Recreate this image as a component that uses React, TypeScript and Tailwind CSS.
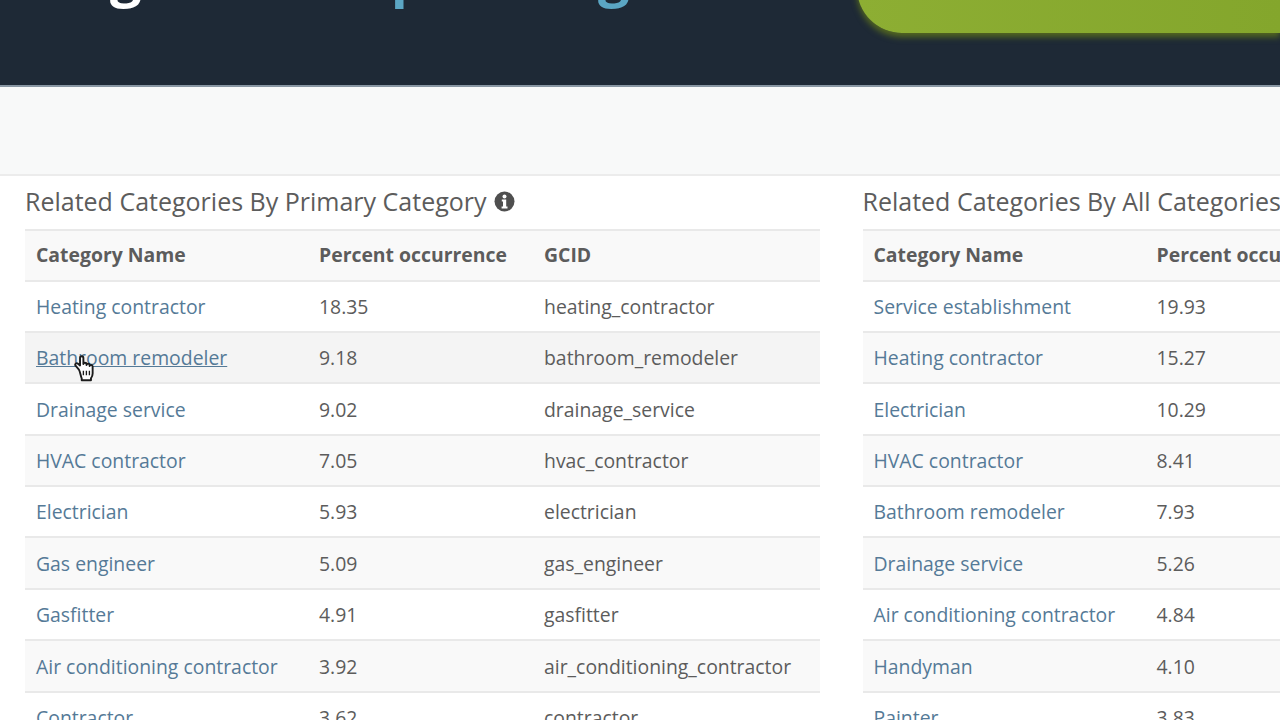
const primaryRows = [
  ["Heating contractor", "18.35", "heating_contractor"],
  ["Bathroom remodeler", "9.18", "bathroom_remodeler"],
  ["Drainage service", "9.02", "drainage_service"],
  ["HVAC contractor", "7.05", "hvac_contractor"],
  ["Electrician", "5.93", "electrician"],
  ["Gas engineer", "5.09", "gas_engineer"],
  ["Gasfitter", "4.91", "gasfitter"],
  ["Air conditioning contractor", "3.92", "air_conditioning_contractor"],
  ["Contractor", "3.62", "contractor"],
];

const allRows = [
  ["Service establishment", "19.93", "establishment_service"],
  ["Heating contractor", "15.27", "heating_contractor"],
  ["Electrician", "10.29", "electrician"],
  ["HVAC contractor", "8.41", "hvac_contractor"],
  ["Bathroom remodeler", "7.93", "bathroom_remodeler"],
  ["Drainage service", "5.26", "drainage_service"],
  ["Air conditioning contractor", "4.84", "air_conditioning_contractor"],
  ["Handyman", "4.10", "handyman"],
  ["Painter", "3.83", "painter"],
];

function InfoIcon() {
  return (
    <svg width="21" height="21" viewBox="0 0 21 21" className="shrink-0">
      <circle cx="10.5" cy="10.5" r="10" fill="#4f4f4f" />
      <circle cx="10.5" cy="5.6" r="2" fill="#fff" />
      <path d="M7.8 8.6h4.4v7h1.3v1.8H7.6v-1.8h1.4v-5.2H7.8z" fill="#fff" />
    </svg>
  );
}

function HandCursor() {
  return (
    <svg width="25" height="29" viewBox="0 0 22 26" className="absolute left-[72px] top-[354px]">
      <path
        d="M6 14 3 10.5c-1.200-1.400.8-3 2.200-1.800L7 10.300V3.500c0-2 3-2 3 0V9c0-1.500 2.800-1.500 2.800 0v.800c0-1.500 2.800-1.500 2.800 0v1c0-1.400 2.700-1.300 2.700.3v6.400c0 2-.6 3-1.500 4.300v1.700H8.500v-1.700C7.500 19.500 7.200 16 6 14Z"
        fill="#fff"
        stroke="#1c1c1c"
        strokeWidth="1.700"
        strokeLinejoin="round"
      />
      <path d="M10 15v4M12.700 15v4M15.400 15v4" stroke="#1c1c1c" strokeWidth="1.200" />
    </svg>
  );
}

function CategoryTable({ title, rows, info }: { title: string; rows: string[][]; info?: boolean }) {
  return (
    <div className="w-[795px] shrink-0">
      <h2 className="flex items-center gap-[7px] h-[53px] pb-[2px] text-[25px] font-normal text-[#5c5c5c] whitespace-nowrap">
        {title}
        {info && <InfoIcon />}
      </h2>
      <div className="grid grid-cols-[283px_225px_1fr] items-center h-[52.500px] pb-[1px] bg-[#f9f9f9] border-y-2 border-[#e9e9e9] px-[11px] text-[19.400px] font-bold text-[#5c5c5c]">
        <span>Category Name</span>
        <span>Percent occurrence</span>
        <span>GCID</span>
      </div>
      {rows.map((row, i) => {
        const hovered = info && i === 1;
        return (
          <div
            key={row[2]}
            className={`grid grid-cols-[283px_225px_1fr] items-center h-[51.400px] pt-[0.500px] border-b-2 border-[#e9e9e9] px-[11px] text-[19.400px] text-[#5c5c5c] ${
              hovered ? "bg-[#f4f4f4]" : i % 2 === 1 ? "bg-[#f9f9f9]" : "bg-white"
            }`}
          >
            <a className={`text-[#557a97] whitespace-nowrap ${hovered ? "underline" : ""}`}>{row[0]}</a>
            <span>{row[1]}</span>
            <span className="whitespace-nowrap">{row[2]}</span>
          </div>
        );
      })}
    </div>
  );
}

export default function App() {
  return (
    <div className="relative w-[1280px] h-[720px] overflow-hidden bg-white font-['Open_Sans',sans-serif]">
      <header className="flex justify-between items-start h-[87px] bg-[#1e2936] border-b-2 border-[#8896a3] overflow-hidden">
        <div className="flex -mt-[58px] text-[56px] leading-[64px] font-bold text-[#5ba6c4]">
          <span className="ml-[110px] text-white">g</span>
          <span className="ml-[249px]">p</span>
          <span className="ml-[172px]">g</span>
        </div>
        <div className="w-[423.500px] h-[45px] -mt-[12px] rounded-bl-[45px] bg-linear-to-r from-[#8dae33] to-[#84a62c] shadow-[0_4px_6px_#55691f]" />
      </header>
      <div className="h-[89px] bg-[#f8f9f9] border-b-2 border-[#ececec]" />
      <main className="flex gap-[42.500px] pl-[25px]">
        <CategoryTable title="Related Categories By Primary Category" rows={primaryRows} info />
        <CategoryTable title="Related Categories By All Categories" rows={allRows} />
      </main>
      <HandCursor />
    </div>
  );
}
